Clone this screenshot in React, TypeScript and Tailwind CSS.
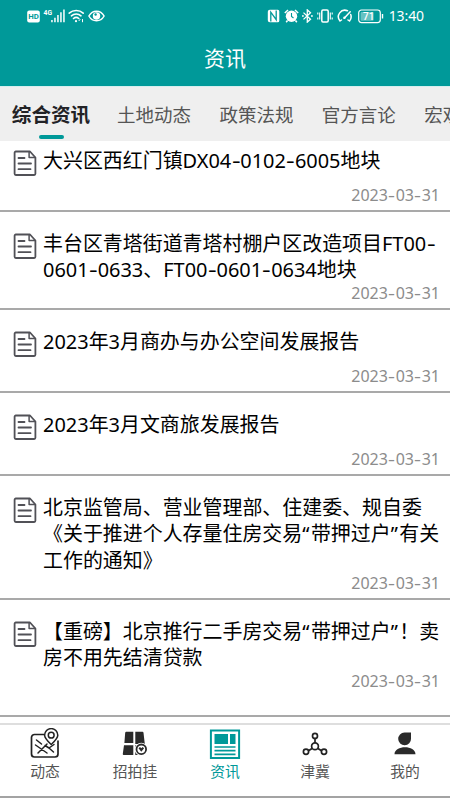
import React from "react";

type Article = { lines: string[]; box: string };

const articles: Article[] = [
  { lines: ["大兴区西红门镇DX04-0102-6005地块"], box: "h-[71px] pt-[6.500px]" },
  { lines: ["丰台区青塔街道青塔村棚户区改造项目FT00-", "0601-0633、FT00-0601-0634地块"], box: "h-[98px] pt-[18.500px]" },
  { lines: ["2023年3月商办与办公空间发展报告"], box: "h-[83px] pt-[18.500px]" },
  { lines: ["2023年3月文商旅发展报告"], box: "h-[83px] pt-[18.500px]" },
  {
    lines: ["北京监管局、营业管理部、住建委、规自委", "《关于推进个人存量住房交易“带押过户”有关", "工作的通知》"],
    box: "h-[124px] pt-[18.500px]",
  },
  { lines: ["【重磅】北京推行二手房交易“带押过户”！卖", "房不用先结清贷款"], box: "h-[117px] pt-[18.500px]" },
];

/* Hyphens are widened and quotation marks get a little extra room. */
function Mixed({ text }: { text: string }) {
  return (
    <>
      {text.split(/([A-Z0-9]+|-|[“”])/).map((part, i) =>
        part === "-" ? (
          <span key={i} className="mx-[1.300px] inline-block scale-x-[1.35]">-</span>
        ) : part === "“" || part === "”" ? (
          <span key={i} className="tracking-[1.500px]">{part}</span>
        ) : (
          <span key={i}>{part}</span>
        ),
      )}
    </>
  );
}

function DocIcon() {
  return (
    <svg className="h-[27px] w-[24px] shrink-0" viewBox="0 0 24 27" fill="none" stroke="#515157" strokeWidth="1.8" strokeLinejoin="round">
      <path d="M2.8 1.5h14.2l5.400 6v16.3a1.2 1.2 0 0 1-1.2 1.2H2.8a1.2 1.2 0 0 1-1.2-1.2V2.7a1.2 1.2 0 0 1 1.2-1.2Z" />
      <path d="M16.1 1.8v5.8h6" strokeWidth="1.5" />
      <path d="M5.500 8h6M5.500 13.5h12.5M5.500 19.2h12" strokeLinecap="round" />
    </svg>
  );
}

function StatusBar() {
  return (
    <div className="flex h-[32px] items-center pl-[27px] pr-[26px] text-white">
      <svg className="h-[13px] w-[13px]" viewBox="0 0 13 13">
        <rect x="0.2" y="0.4" width="12.6" height="12.2" rx="2" fill="white" />
        <text x="6.5" y="9.4" textAnchor="middle" fontSize="7.8" fontWeight="700" fill="#009999" fontFamily="Roboto, sans-serif">HD</text>
      </svg>
      <svg className="ml-[3px] h-[16px] w-[24px]" viewBox="0 0 24 16" fill="white">
        <text x="0.500" y="6.8" fontSize="7.4" fontWeight="700" fontFamily="Roboto, sans-serif" textLength="8.500" lengthAdjust="spacingAndGlyphs">4G</text>
        <path d="M8.2 12h1.5v2.3H8.2zM11.2 9.8h1.5v4.5h-1.5zM14.2 7h1.5v7.3h-1.5zM17.2 4.2h1.5v10.1h-1.5zM20.2 1.5h1.5v12.8h-1.5z" />
      </svg>
      <svg className="ml-[1px] h-[14px] w-[17px]" viewBox="0 0 17 14" fill="none" stroke="white" strokeWidth="1.6" strokeLinecap="round">
        <path d="M1.2 4.1a10.5 10.5 0 0 1 14 0M3.4 6.8a7.2 7.2 0 0 1 9.6 0M5.5 9.5a4 4 0 0 1 5.3 0" />
        <circle cx="8" cy="12.2" r="1.1" fill="white" stroke="none" />
        <path d="m12 10.5-1 1.2M14.5 10.5v2.3" strokeWidth="1" />
      </svg>
      <svg className="ml-[3px] h-[12px] w-[17px]" viewBox="0 0 17 12" fill="none" stroke="white" strokeWidth="1.5">
        <path d="M.9 6C4.5-.4 12.5-.4 16.1 6 12.5 12.4 4.500 12.4.9 6Z" />
        <circle cx="8.5" cy="6" r="3.7" fill="white" stroke="none" />
        <circle cx="7.6" cy="4.5" r="1.2" fill="#009999" stroke="none" />
      </svg>
      <div className="ml-auto flex items-center">
        <svg className="h-[14px] w-[13px]" viewBox="0 0 13 14">
          <path d="M2.8.8h8a1.500 1.500 0 0 1 1.500 1.500v9.400a1.500 1.500 0 0 1-1.500 1.500h-8a2 2 0 0 1-2-2V2.800a2 2 0 0 1 2-2Z" fill="white" />
          <path d="M3.800 12.500V3.200l5.400 7.500V1.500" fill="none" stroke="#009999" strokeWidth="1.3" />
        </svg>
        <svg className="ml-[4px] h-[14px] w-[15px]" viewBox="0 0 15 14">
          <circle cx="7.500" cy="7.200" r="5.700" fill="white" />
          <path d="M.8 4 4 1M14.200 4 11 1M3.500 11.500l-1.300 1.700M11.500 11.500l1.300 1.700" stroke="white" strokeWidth="1.5" />
          <path d="M7.500 4v3.500l2 1.500" fill="none" stroke="#009999" strokeWidth="1.1" />
        </svg>
        <svg className="ml-[3px] h-[14px] w-[11px]" viewBox="0 0 11 14" fill="none" stroke="white" strokeWidth="1.3">
          <path d="m1.500 3.600 7 6.700-3.200 2.800V.9l3.200 2.800-7 6.700" />
          <path d="M0 7h1.800M9 7h1.800" strokeWidth="1.5" />
        </svg>
        <svg className="ml-[4px] h-[14px] w-[16px]" viewBox="0 0 16 14" fill="none" stroke="white" strokeWidth="1.5">
          <rect x="4.800" y="1" width="6.400" height="12" rx="1.200" />
          <path d="M2.700 3.500v7M13.300 3.500v7M.8 3.500v2m0 3v2M15.200 3.500v2m0 3v2" strokeWidth="1.100" />
        </svg>
        <svg className="ml-[4px] h-[14px] w-[16px]" viewBox="0 0 16 14" fill="none" stroke="white" strokeWidth="1.500" strokeLinecap="round">
          <path d="M3 12A6.500 6.500 0 0 1 10.500 1.800M13.700 5.500A6.500 6.500 0 0 1 12.500 12M3 12l1.500-1M12.500 12 11 11M7.200 9.200l6-6.500" />
          <circle cx="7.500" cy="8.800" r="1.200" fill="white" stroke="none" />
        </svg>
        <svg className="ml-[5px] h-[15px] w-[26px]" viewBox="0 0 26 15">
          <rect x="0.700" y="1" width="21.600" height="12.600" rx="2.800" fill="none" stroke="white" strokeWidth="1.200" />
          <rect x="2.600" y="2.900" width="13" height="8.800" rx="1" fill="white" opacity="0.4" />
          <path d="M24.500 5v4.500" stroke="white" strokeWidth="1.400" />
          <text x="10.800" y="11" textAnchor="middle" fontSize="10" fontWeight="500" fill="white" fontFamily="Roboto, sans-serif">71</text>
        </svg>
        <span className="ml-[4px] w-[36px] whitespace-nowrap text-right font-['Noto_Sans'] text-[14px] leading-[18px] tracking-[-0.1px]">13:40</span>
      </div>
    </div>
  );
}

const tabs = ["土地动态", "政策法规", "官方言论", "宏观"];

function MapIcon() {
  return (
    <svg className="h-[32px] w-[32px]" viewBox="0 0 32 32" fill="none" stroke="#222" strokeWidth="1.700" strokeLinecap="round" strokeLinejoin="round">
      <path d="M16 6.500H5.500a3 3 0 0 0-3 3v16.500a3 3 0 0 0 3 3h20.500a3 3 0 0 0 3-3V13" />
      <path d="M7.500 12l5 4M6.500 17l11.500 8M9 25l9-9M16 17.500l4 2.500 4.500 4M20 20l5-3.500" strokeWidth="1.500" />
      <path d="M22.200 16.500c-4.500-4.200-6.600-6.600-6.600-9.300a6.600 6.600 0 0 1 13.200 0c0 2.700-2.100 5.100-6.600 9.300Z" fill="white" strokeWidth="1.500" />
      <circle cx="22.200" cy="7.200" r="2.900" strokeWidth="1.500" />
    </svg>
  );
}

function GridIcon() {
  return (
    <svg className="h-[32px] w-[32px]" viewBox="0 0 32 32">
      <path d="M7 3.800H14.300V15H5.400L6.200 4.600zM16.300 3.800h7.200a1 1 0 0 1 1 .9l1.300 11.300H16.300zM5 17.200h9.300V27H4.800a1 1 0 0 1-1-1.200zM16.300 17.200h6V27h-6z" fill="#2a2a2a" />
      <circle cx="22.300" cy="21.300" r="6.600" fill="white" />
      <circle cx="22.300" cy="21.300" r="4.800" fill="white" stroke="#2a2a2a" strokeWidth="1.800" />
      <path d="m19.500 20.300 2.800 3.400 2.800-3.400-1.500-1.300-1.300 1.300-1.300-1.300z" fill="#2a2a2a" />
    </svg>
  );
}

function NewsIcon() {
  return (
    <svg className="h-[32px] w-[32px]" viewBox="0 0 32 32" fill="none" stroke="#009999">
      <rect x="1.900" y="2.500" width="28.200" height="27.500" strokeWidth="2" />
      <path d="M5.500 6H19v10H5.500zM21 6h5.500v10H21z" fill="#009999" stroke="none" />
      <path d="M5.500 19h21M5.500 22.700h21M5.500 26.400h21" strokeWidth="1.700" />
    </svg>
  );
}

function NodesIcon() {
  return (
    <svg className="h-[32px] w-[32px]" viewBox="0 0 32 32" fill="none" stroke="#222" strokeWidth="1.700">
      <path d="M16 10v5M13 20.500l-3.500 2.300M19 20.500l3.500 2.300" />
      <circle cx="16" cy="18.300" r="3.400" />
      <circle cx="16" cy="7.900" r="2.500" />
      <circle cx="7" cy="23.800" r="2.600" />
      <circle cx="25" cy="23.800" r="2.600" />
    </svg>
  );
}

function UserIcon() {
  return (
    <svg className="h-[32px] w-[32px]" viewBox="0 0 32 32" fill="#2a2a2a">
      <path d="M15.500 4.500H22v6.200a6.400 6.400 0 1 1-6.500-6.200ZM5.500 26.200c0-9.300 21-9.300 21 0Z" />
    </svg>
  );
}

const navItems = [
  { label: "动态", icon: <MapIcon />, color: "text-[#555]" },
  { label: "招拍挂", icon: <GridIcon />, color: "text-[#555]" },
  { label: "资讯", icon: <NewsIcon />, color: "text-[#009999]" },
  { label: "津冀", icon: <NodesIcon />, color: "text-[#555]" },
  { label: "我的", icon: <UserIcon />, color: "text-[#555]" },
];

export default function App() {
  return (
    <div lang="zh-CN" className="flex h-[800px] w-[450px] flex-col overflow-hidden bg-white font-['Noto_Sans','Noto_Sans_CJK_SC',sans-serif]">
      <header className="h-[86px] shrink-0 bg-[#009999]">
        <StatusBar />
        <h1 className="pt-[11px] text-center text-[21px] leading-[30px] text-white">资讯</h1>
      </header>
      <nav className="flex h-[55px] shrink-0 gap-[28px] overflow-hidden whitespace-nowrap border-t border-[#d5eeee] bg-[#efefef] pl-[12px] text-[18.5px] leading-[28px] text-[#555]">
        <div className="flex w-[78px] shrink-0 flex-col items-center pt-[14px]">
          <span className="text-[19.6px] font-bold text-[#222226]">综合资讯</span>
          <span className="mt-[6px] h-[4px] w-[25px] rounded-full bg-[#009999]" />
        </div>
        {tabs.map((t) => (
          <span key={t} className="-ml-[1px] w-[75.400px] shrink-0 pt-[14px]">{t}</span>
        ))}
      </nav>
      <main className="shrink-0">
        {articles.map((a) => (
          <article key={a.lines[0]} className={`flex border-b-2 border-[#a9a9a9] pl-[13px] ${a.box}`}>
            <div className="pt-[2.500px]"><DocIcon /></div>
            <div className="flex-1 pl-[6px]">
              <h2 className="min-h-[38px] whitespace-nowrap text-[19.950px] leading-[26.500px] text-black">
                {a.lines.map((l) => (
                  <span key={l} className="block"><Mixed text={l} /></span>
                ))}
              </h2>
              <p className="pr-[10px] text-right text-[16px] leading-[18.500px] text-[#8c8c8c]">
                <Mixed text="2023-03-31" />
              </p>
            </div>
          </article>
        ))}
      </main>
      <footer className="mt-[6px] grid h-[75px] shrink-0 grid-cols-5 border-b-2 border-t-2 border-b-[#a3a3a3] border-t-[#dedede]">
        {navItems.map((n) => (
          <div key={n.label} className={`flex flex-col items-center pt-[3px] text-[14.800px] leading-[22px] ${n.color}`}>
            {n.icon}
            <span>{n.label}</span>
          </div>
        ))}
      </footer>
    </div>
  );
}
